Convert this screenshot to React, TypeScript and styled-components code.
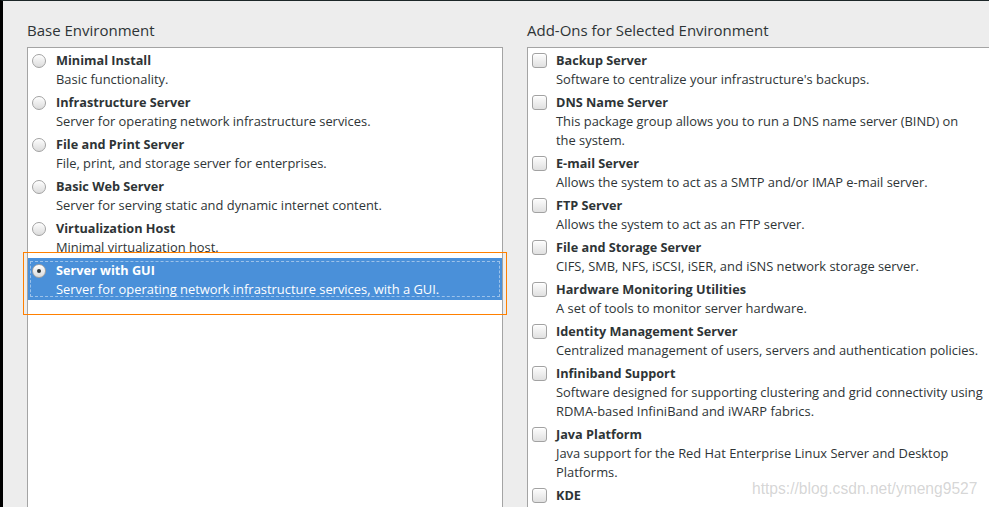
import React from "react";
import styled, { createGlobalStyle } from "styled-components";

const GlobalStyle = createGlobalStyle`
  html, body {
    margin: 0;
    padding: 0;
    overflow: hidden;
    background: #ededed;
  }
`;

type Option = {
  name: string;
  lines: string[];
  selected?: boolean;
};

const environments: Option[] = [
  { name: "Minimal Install", lines: ["Basic functionality."] },
  { name: "Infrastructure Server", lines: ["Server for operating network infrastructure services."] },
  { name: "File and Print Server", lines: ["File, print, and storage server for enterprises."] },
  { name: "Basic Web Server", lines: ["Server for serving static and dynamic internet content."] },
  { name: "Virtualization Host", lines: ["Minimal virtualization host."] },
  {
    name: "Server with GUI",
    lines: ["Server for operating network infrastructure services, with a GUI."],
    selected: true,
  },
];

const addons: Option[] = [
  { name: "Backup Server", lines: ["Software to centralize your infrastructure's backups."] },
  {
    name: "DNS Name Server",
    lines: ["This package group allows you to run a DNS name server (BIND) on", "the system."],
  },
  { name: "E-mail Server", lines: ["Allows the system to act as a SMTP and/or IMAP e-mail server."] },
  { name: "FTP Server", lines: ["Allows the system to act as an FTP server."] },
  { name: "File and Storage Server", lines: ["CIFS, SMB, NFS, iSCSI, iSER, and iSNS network storage server."] },
  { name: "Hardware Monitoring Utilities", lines: ["A set of tools to monitor server hardware."] },
  {
    name: "Identity Management Server",
    lines: ["Centralized management of users, servers and authentication policies."],
  },
  {
    name: "Infiniband Support",
    lines: [
      "Software designed for supporting clustering and grid connectivity using",
      "RDMA-based InfiniBand and iWARP fabrics.",
    ],
  },
  {
    name: "Java Platform",
    lines: ["Java support for the Red Hat Enterprise Linux Server and Desktop", "Platforms."],
  },
  { name: "KDE", lines: [] },
];

const App = () => {
  return (
    <Screen>
      <GlobalStyle />
      <Column $width={476}>
        <Heading>Base Environment</Heading>
        <Panel>
          {environments.map((opt) => (
            <Row key={opt.name} $selected={opt.selected}>
              <Control>
                <Radio $checked={opt.selected} />
              </Control>
              <div>
                <Title>{opt.name}</Title>
                {opt.lines.map((l) => (
                  <Desc key={l}>{l}</Desc>
                ))}
              </div>
              {opt.selected && <FocusRing />}
            </Row>
          ))}
          <Highlight />
        </Panel>
      </Column>
      <Column $width={490}>
        <Heading>Add-Ons for Selected Environment</Heading>
        <Panel>
          {addons.map((opt) => (
            <Row key={opt.name}>
              <Control>
                <Check />
              </Control>
              <div>
                <Title>{opt.name}</Title>
                {opt.lines.map((l) => (
                  <Desc key={l}>{l}</Desc>
                ))}
              </div>
            </Row>
          ))}
        </Panel>
      </Column>
      <Watermark>https://blog.csdn.net/ymeng9527</Watermark>
    </Screen>
  );
};

const Screen = styled.div`
  position: relative;
  display: flex;
  gap: 24px;
  width: 989px;
  height: 507px;
  box-sizing: border-box;
  border-left: 3px solid #000;
  border-top: 1px solid #1c2628;
  padding-left: 24px;
  background: #ededed;
  overflow: hidden;
  font-family: "Open Sans", "DejaVu Sans", sans-serif;
  color: #2e3436;
`;

const Column = styled.div<{ $width: number }>`
  display: flex;
  flex-direction: column;
  width: ${(p) => p.$width}px;
  flex-shrink: 0;
`;

const Heading = styled.div`
  padding-top: 19px;
  margin-bottom: 7px;
  font-size: 15px;
  line-height: 20px;
  white-space: nowrap;
`;

const Panel = styled.div`
  position: relative;
  flex: 1;
  background: #fff;
  border: 1px solid #a4a4a4;
  border-bottom: none;
`;

const Row = styled.div<{ $selected?: boolean }>`
  position: relative;
  display: grid;
  grid-template-columns: 24px 1fr;
  padding: 3px 0 1px 4px;
  background: ${(p) => (p.$selected ? "#4a90d9" : "transparent")};
  color: ${(p) => (p.$selected ? "#fff" : "#2e3436")};
  white-space: nowrap;
`;

const Control = styled.div`
  height: 19px;
  display: flex;
  align-items: center;
`;

const Radio = styled.span<{ $checked?: boolean }>`
  position: relative;
  width: 12px;
  height: 12px;
  border-radius: 50%;
  border: 1px solid #a2a2a2;
  background: linear-gradient(#fdfdfd, #dcdcdc);
  box-shadow: inset 0 1px 0 #fff;

  &::after {
    content: "";
    display: ${(p) => (p.$checked ? "block" : "none")};
    position: absolute;
    left: 4px;
    top: 4px;
    width: 4px;
    height: 4px;
    border-radius: 50%;
    background: #2e3436;
  }
`;

const Check = styled.span`
  width: 13px;
  height: 13px;
  border-radius: 3px;
  border: 1px solid #a2a2a2;
  background: linear-gradient(#fdfdfd, #e0e0e0);
  box-shadow: inset 0 1px 0 #fff;
`;

const Title = styled.div`
  font-size: 12.7px;
  font-weight: 700;
  line-height: 19px;
`;

const Desc = styled.div`
  font-size: 12.9px;
  line-height: 19px;
`;

const FocusRing = styled.div`
  position: absolute;
  inset: 3px 2px 3px 2px;
  border: 1px dashed rgba(255, 255, 255, 0.45);
  pointer-events: none;
`;

const Highlight = styled.div`
  position: absolute;
  left: -5px;
  top: 204px;
  width: 482px;
  height: 61px;
  border: 1px solid #ff8000;
  pointer-events: none;
`;

const Watermark = styled.div`
  position: absolute;
  left: 749px;
  top: 478px;
  font-family: "Liberation Sans", Arial, sans-serif;
  font-size: 15.6px;
  line-height: 20px;
  color: rgba(150, 150, 150, 0.4);
  white-space: nowrap;
  pointer-events: none;
`;

export default App;
